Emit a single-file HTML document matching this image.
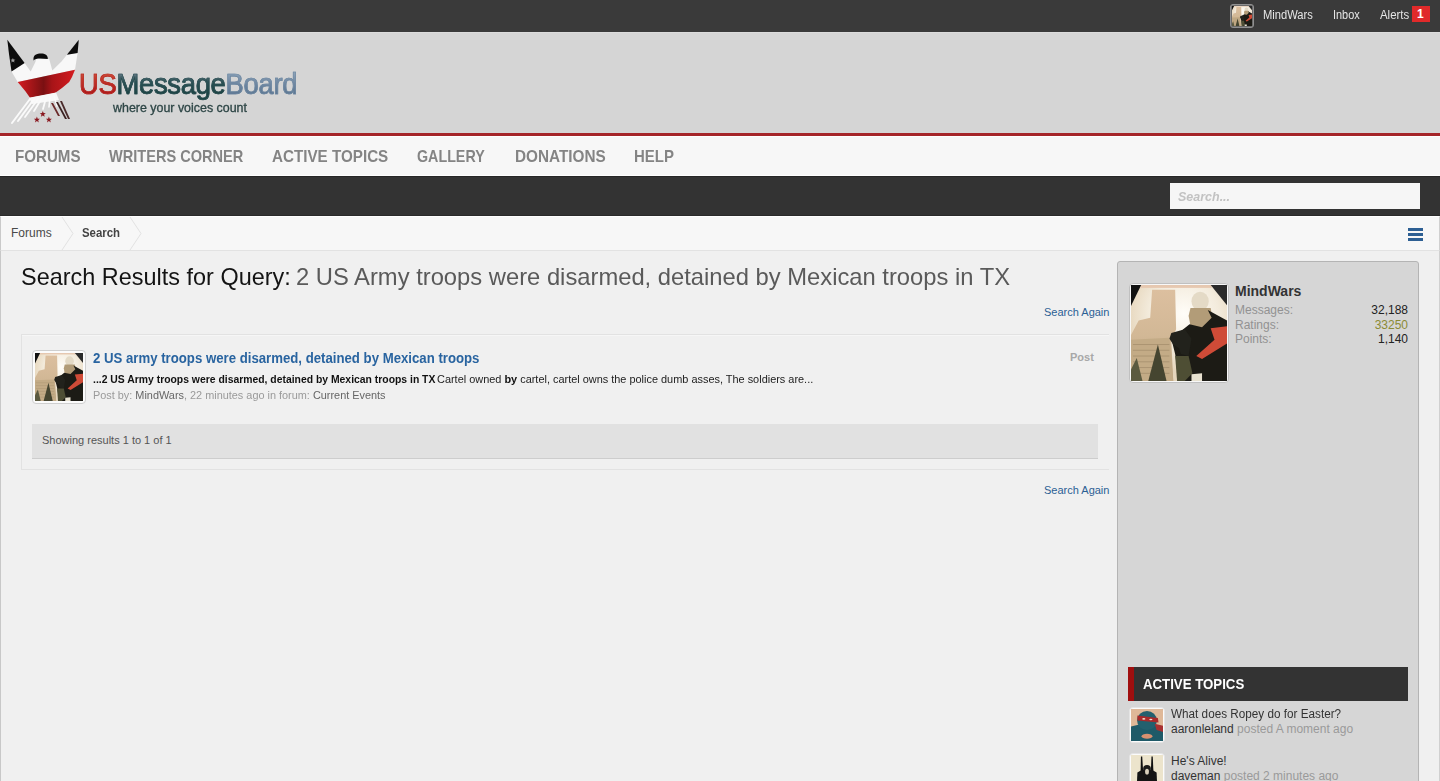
<!DOCTYPE html>
<html><head><meta charset="utf-8">
<style>
html,body{margin:0;padding:0;width:1440px;height:781px;overflow:hidden;background:#f0f0f0;font-family:"Liberation Sans",sans-serif;}
.a{position:absolute;}
.t{position:absolute;white-space:nowrap;line-height:1;}
#topbar{left:0;top:0;width:1440px;height:32px;background:#3a3a3a;}
#header{left:0;top:32px;width:1440px;height:101px;background:#d5d5d5;border-top:1px solid #dcdcdc;box-sizing:border-box;}
#red{left:0;top:133px;width:1440px;height:3px;background:#a52529;}
#nav{left:0;top:136px;width:1440px;height:40px;background:#f7f7f7;border-top:1px solid #fff;border-bottom:1px solid #fff;box-sizing:border-box;}
#dark{left:0;top:176px;width:1440px;height:40px;background:#333;border-top:1px solid #262626;border-bottom:1px solid #2a2a2a;box-sizing:border-box;}
#crumbs{left:0;top:216px;width:1440px;height:35px;background:#f7f7f7;border-top:1px solid #fff;border-bottom:1px solid #e2e2e2;border-left:1px solid #cacaca;border-right:1px solid #d0d0d0;box-sizing:border-box;}
#main{left:0;top:251px;width:1440px;height:530px;background:#f0f0f0;border-left:1px solid #c8c8c8;border-right:1px solid #d0d0d0;box-sizing:border-box;}
.nav{font-size:17px;font-weight:700;color:#848484;}
.tl{font-size:12px;color:#e6e6e6;}
.link{color:#2b5f94;}
.sx{transform-origin:0 0;}
</style></head><body>
<div id="topbar" class="a"></div>
<div id="header" class="a"></div>
<div id="red" class="a"></div>
<div id="nav" class="a"></div>
<div id="dark" class="a"></div>
<div id="crumbs" class="a"></div>
<div id="main" class="a"></div>

<!-- top bar links -->
<div class="a" style="left:1230px;top:4px;width:24px;height:24px;border:1px solid #909090;border-radius:3px;background:#6a6a6a;box-sizing:border-box;"></div>
<svg class="a" style="left:1232px;top:6px" width="20" height="20"><use href="#mw"/></svg>
<div class="t tl sx" style="left:1263px;top:9px;transform:scaleX(0.93)">MindWars</div>
<div class="t tl sx" style="left:1333px;top:9px;transform:scaleX(0.91)">Inbox</div>
<div class="t tl sx" style="left:1380px;top:9px;transform:scaleX(0.95)">Alerts</div>
<div class="a" style="left:1412px;top:6px;width:18px;height:16px;background:#e02a2a;"></div>
<div class="t" style="left:1417px;top:8px;font-size:12px;font-weight:700;color:#fff;">1</div>

<!-- nav -->
<div class="t nav sx" style="left:15px;top:148px;transform:scaleX(0.89)">FORUMS</div>
<div class="t nav sx" style="left:109px;top:148px;transform:scaleX(0.857)">WRITERS CORNER</div>
<div class="t nav sx" style="left:272px;top:148px;transform:scaleX(0.894)">ACTIVE TOPICS</div>
<div class="t nav sx" style="left:417px;top:148px;transform:scaleX(0.84)">GALLERY</div>
<div class="t nav sx" style="left:515px;top:148px;transform:scaleX(0.9)">DONATIONS</div>
<div class="t nav sx" style="left:634px;top:148px;transform:scaleX(0.88)">HELP</div>

<!-- search box -->
<div class="a" style="left:1170px;top:183px;width:250px;height:26px;background:#f6f6f6;"></div>
<div class="t sx" style="left:1178px;top:190px;font-size:13px;font-style:italic;font-weight:700;color:#c2c2c2;transform:scaleX(0.96)">Search...</div>

<!-- breadcrumbs -->
<div class="t" style="left:11px;top:227px;font-size:12px;color:#4a4a4a;">Forums</div>
<div class="t sx" style="left:82px;top:227px;font-size:12px;font-weight:700;color:#444;transform:scaleX(0.95)">Search</div>

<!-- title -->
<div class="t sx" style="left:21px;top:265px;font-size:24px;color:#141414;transform:scaleX(0.977)">Search Results for Query:</div>
<div class="t sx" style="left:296px;top:265px;font-size:24px;color:#5a5a5a;transform:scaleX(0.99)">2 US Army troops were disarmed, detained by Mexican troops in TX</div>
<div class="t link" style="left:1044px;top:307px;font-size:11px;">Search Again</div>

<!-- sidebar -->
<div class="a" style="left:1117px;top:261px;width:302px;height:540px;background:#d6d6d6;border:1px solid #b4b4b4;border-radius:3px;box-sizing:border-box;"></div>



<svg width="0" height="0" style="position:absolute">
<defs>
<symbol id="mw" viewBox="0 0 100 100">
<defs>
<radialGradient id="sky" cx="0.55" cy="0.3" r="0.6"><stop offset="0" stop-color="#fffdf8"/><stop offset="0.6" stop-color="#f3ebdc"/><stop offset="1" stop-color="#e6d6bc"/></radialGradient>
<linearGradient id="bld" x1="0" y1="0" x2="0" y2="1"><stop offset="0" stop-color="#dcbf9f"/><stop offset="0.5" stop-color="#d2b896"/><stop offset="1" stop-color="#bda580"/></linearGradient>
</defs>
<rect width="100" height="100" fill="url(#sky)"/>
<rect x="10" y="0" width="74" height="3" fill="#e6c8b0"/>
<polygon points="22,5 46,5 47,46 42,58 44,100 0,100 0,52 8,37 20,34" fill="url(#bld)"/>
<polygon points="0,57 40,55 44,100 0,100" fill="#c3ab86"/>
<g stroke="#8a7658" stroke-width="0.8" opacity="0.55">
<line x1="2" y1="62" x2="40" y2="62"/><line x1="2" y1="68" x2="40" y2="68"/><line x1="2" y1="74" x2="40" y2="74"/><line x1="2" y1="80" x2="40" y2="80"/><line x1="2" y1="86" x2="40" y2="86"/><line x1="2" y1="92" x2="40" y2="92"/>
</g>
<polygon points="28,62 37,100 18,100" fill="#454530"/>
<polygon points="6,76 12,100 0,100 0,88" fill="#5b5a40"/>
<polygon points="0,0 10.6,0 0,21.8" fill="#111"/>
<polygon points="83,0 100,0 100,21" fill="#2a2a2a"/>
<ellipse cx="72" cy="17" rx="9" ry="10" fill="#e4dac6"/>
<polygon points="62,24 83,24 85,36 75,46 62,43 60,32" fill="#b29c78"/>
<polygon points="80,26 100,37 100,100 50,100 46,72 42,56 61,41 74,44 84,34" fill="#1c1b15"/>
<polygon points="83,45 100,43 100,61 74,77 68,74 87,57" fill="#cf4b37"/>
<polygon points="42,50 56,46 63,56 60,74 52,72 50,66 44,62 40,56" fill="#22221c"/>
<polygon points="46,74 60,74 64,92 56,100 48,100" fill="#4e4e34"/>
<polygon points="63,93 74,92 74,100 63,100" fill="#e8e2d0"/>
</symbol>
<symbol id="turtle" viewBox="0 0 100 100">
<rect width="100" height="100" fill="#dfb898"/>
<polygon points="0,55 30,48 70,48 100,55 100,100 0,100" fill="#1f5a68"/>
<ellipse cx="50" cy="36" rx="31" ry="30" fill="#23606e"/>
<polygon points="20,20 84,28 86,42 20,36" fill="#a82a2a"/>
<ellipse cx="40" cy="31" rx="5" ry="2.5" fill="#f0e0d0"/>
<ellipse cx="62" cy="33" rx="5" ry="2.5" fill="#f0e0d0"/>
<polygon points="74,46 100,52 100,72 80,66" fill="#a83030"/>
<ellipse cx="50" cy="85" rx="17" ry="8" fill="#d89070"/>
</symbol>
<symbol id="dave" viewBox="0 0 100 100">
<rect width="100" height="100" fill="#ece4cc"/>
<polygon points="31,5 35,5 38,50 30,50" fill="#111"/>
<polygon points="64,5 68,5 70,50 62,50" fill="#111"/>
<polygon points="20,55 36,45 64,45 80,55 82,100 18,100" fill="#141414"/>
<ellipse cx="50" cy="42" rx="12" ry="11" fill="#1a1a1a"/>
<ellipse cx="50" cy="52" rx="6" ry="9" fill="#d8d0bc"/>
</symbol>
<linearGradient id="usg" x1="0" y1="0" x2="0" y2="1"><stop offset="0" stop-color="#c8443a"/><stop offset="1" stop-color="#a81c22"/></linearGradient>
</defs>
</svg>

<!-- logo eagle -->
<svg class="a" style="left:0;top:34px" width="100" height="96" viewBox="0 0 100 96">
<defs>
<linearGradient id="rg" x1="0" y1="0" x2="1" y2="0"><stop offset="0" stop-color="#d41c20"/><stop offset="0.45" stop-color="#7a1012"/><stop offset="0.6" stop-color="#a81418"/><stop offset="1" stop-color="#d41c20"/></linearGradient>
</defs>
<polygon points="11.5,37.4 24.6,28.9 30.7,37.4 35.4,28.1 36,25 49.2,25 52.3,36.6 61.5,27.4 66.9,20.8 77.6,18.9 75,35.8 17.7,48.1" fill="#f8f8f8"/>
<polygon points="7.3,5.8 24.6,28.9 11.5,37.4 9,20" fill="#0c0c0c"/>
<polygon points="66.9,20.8 78.8,5.8 77.6,18.9" fill="#0c0c0c"/>
<path d="M33.5,25.5 C33,21 37,19.5 41,19.5 C45,19.5 48,21 47.8,25 L40,24.5 C37,24.5 35,25 33.5,26.5 Z" fill="#0c0c0c"/>
<polygon points="17.7,48.1 75,35.8 72,43 69.2,48.1 62,54 55,59 45,61 30,63.7 25.4,57.3" fill="url(#rg)"/>
<polygon points="29,63.7 56,58.5 59,66 46,68 32,70" fill="#f8f8f8"/>
<g stroke="#fafafa" stroke-linecap="round">
<line x1="30" y1="65" x2="12" y2="89" stroke-width="2"/>
<line x1="34" y1="65" x2="18" y2="87" stroke-width="2"/>
<line x1="38" y1="65" x2="25" y2="83" stroke-width="1.8"/>
<line x1="42" y1="64" x2="34" y2="77" stroke-width="1.8"/>
<line x1="46" y1="64" x2="43" y2="75" stroke-width="1.8"/>
<line x1="50" y1="63" x2="49" y2="73" stroke-width="1.6"/>
<line x1="54" y1="62" x2="57" y2="72" stroke-width="1.6"/>
</g>
<polygon points="51,69 53,69 60,82 58,82" fill="#6a2a2a"/>
<polygon points="56,68 58,68 67,85 65,85" fill="#3a2020"/>
<polygon points="60,67 62,67 70,85 68,85" fill="#4a2a2a"/>
<polygon points="42.8,77.0 43.6,79.1 45.8,79.2 44.1,80.6 44.7,82.8 42.8,81.5 40.9,82.8 41.5,80.6 39.8,79.2 42.0,79.1" fill="#8a1820"/>
<polygon points="36.9,82.6 37.7,84.7 39.9,84.8 38.2,86.2 38.8,88.4 36.9,87.1 35.0,88.4 35.6,86.2 33.9,84.8 36.1,84.7" fill="#8a1820"/>
<polygon points="48.9,82.6 49.7,84.7 51.9,84.8 50.2,86.2 50.8,88.4 48.9,87.1 47.0,88.4 47.6,86.2 45.9,84.8 48.1,84.7" fill="#8a1820"/>
<polygon points="12.9,23.9 13.6,25.6 15.4,25.7 14,26.8 14.5,28.6 12.9,27.6 11.3,28.6 11.8,26.8 10.4,25.7 12.2,25.6" fill="#a0a0a0"/>
</svg>
<div class="t" style="left:79px;top:69px;font-size:30px;transform:scaleX(0.912);transform-origin:0 0;letter-spacing:-0.3px;-webkit-text-stroke:0.7px;"><span style="background:linear-gradient(#d8684e 0%,#c43a2c 35%,#b01c1c 75%);-webkit-background-clip:text;background-clip:text;-webkit-text-fill-color:transparent;-webkit-text-stroke:0.7px #b82a24">US</span><span style="background:linear-gradient(#6f8290 15%,#2c5256 45%,#1c4444 80%);-webkit-background-clip:text;background-clip:text;-webkit-text-fill-color:transparent;-webkit-text-stroke:0.7px #2a4c50">Message</span><span style="background:linear-gradient(#8ea4ba 15%,#7088a2 50%,#5e7894 80%);-webkit-background-clip:text;background-clip:text;-webkit-text-fill-color:transparent;-webkit-text-stroke:0.7px #6d87a0">Board</span></div>
<div class="t" style="left:113px;top:101px;font-size:13.5px;color:#2e4646;transform:scaleX(0.92);transform-origin:0 0;-webkit-text-stroke:0.35px;">where your voices count</div>

<!-- hamburger -->
<div class="a" style="left:1408px;top:228px;width:15px;height:3px;background:#2d5f93;"></div>
<div class="a" style="left:1408px;top:233px;width:15px;height:3px;background:#2d5f93;"></div>
<div class="a" style="left:1408px;top:238px;width:15px;height:3px;background:#2d5f93;"></div>

<!-- breadcrumb arrows -->
<svg class="a" style="left:60px;top:217px" width="16" height="33"><polyline points="2,0 13,16.5 2,33" fill="none" stroke="#e2e2e2" stroke-width="1"/></svg>
<svg class="a" style="left:128px;top:217px" width="16" height="33"><polyline points="2,0 13,16.5 2,33" fill="none" stroke="#e2e2e2" stroke-width="1"/></svg>

<!-- results box -->
<div class="a" style="left:21px;top:334px;width:1088px;height:136px;border:1px solid #e2e2e2;border-right:none;box-sizing:border-box;"></div>
<div class="a" style="left:22px;top:335px;width:1087px;height:1px;background:#f6f6f6;"></div>
<div class="a" style="left:32px;top:350px;width:54px;height:54px;border:1px solid #cfcfcf;border-radius:4px;background:#fbfbfb;box-sizing:border-box;"></div>
<svg class="a" style="left:35px;top:353px" width="48" height="48"><use href="#mw"/></svg>
<div class="t link sx" style="left:93px;top:351px;font-size:14.5px;font-weight:700;color:#2964a0;transform:scaleX(0.91)">2 US army troops were disarmed, detained by Mexican troops</div>
<div class="t" style="left:1070px;top:352px;font-size:11px;font-weight:700;color:#a8a8a8;">Post</div>
<div class="t sx" style="left:93px;top:374px;font-size:11px;color:#111;font-weight:700;transform:scaleX(0.944)">...2 US Army troops were disarmed, detained by Mexican troops in TX</div>
<div class="t sx" style="left:437px;top:374px;font-size:11px;color:#222;transform:scaleX(0.993)">Cartel owned <b style="color:#111">by</b> cartel, cartel owns the police dumb asses, The soldiers are...</div>
<div class="t sx" style="left:93px;top:390px;font-size:11px;color:#9a9a9a;transform:scaleX(0.99)">Post by: <span style="color:#666">MindWars</span>, 22 minutes ago in forum: <span style="color:#666">Current Events</span></div>
<div class="a" style="left:32px;top:424px;width:1066px;height:35px;background:#e1e1e1;border-bottom:1px solid #cdcdcd;box-sizing:border-box;"></div>
<div class="t" style="left:42px;top:435px;font-size:11px;color:#555;">Showing results 1 to 1 of 1</div>
<div class="t link" style="left:1044px;top:485px;font-size:11px;">Search Again</div>

<!-- sidebar content -->
<div class="a" style="left:1129px;top:283px;width:100px;height:100px;border:1px solid #c0c0c0;border-radius:4px;background:#f8f8f8;box-sizing:border-box;"></div>
<svg class="a" style="left:1131px;top:285px" width="96" height="96"><use href="#mw"/></svg>
<div class="t" style="left:1235px;top:284px;font-size:14px;font-weight:700;color:#333;">MindWars</div>
<div class="t" style="left:1235px;top:304px;font-size:12px;color:#929292;">Messages:</div>
<div class="t" style="left:1235px;top:319px;font-size:12px;color:#929292;">Ratings:</div>
<div class="t" style="left:1235px;top:333px;font-size:12px;color:#929292;">Points:</div>
<div class="t" style="right:32px;top:304px;font-size:12px;color:#222;">32,188</div>
<div class="t" style="right:32px;top:319px;font-size:12px;color:#8b8b35;">33250</div>
<div class="t" style="right:32px;top:333px;font-size:12px;color:#222;">1,140</div>

<div class="a" style="left:1128px;top:667px;width:280px;height:34px;background:#333;"></div>
<div class="a" style="left:1128px;top:667px;width:6px;height:34px;background:#a00f0f;"></div>
<div class="t sx" style="left:1143px;top:677px;font-size:14px;font-weight:700;color:#fff;transform:scaleX(0.945)">ACTIVE TOPICS</div>

<div class="a" style="left:1129px;top:707px;width:36px;height:36px;border:1px solid #e4e4e4;border-radius:4px;background:#fbfbfb;box-sizing:border-box;"></div>
<svg class="a" style="left:1131px;top:709px" width="32" height="32"><use href="#turtle"/></svg>
<div class="t sx" style="left:1171px;top:708px;font-size:12px;color:#333;transform:scaleX(0.977)">What does Ropey do for Easter?</div>
<div class="t sx" style="left:1171px;top:723px;font-size:12px;color:#333;transform:scaleX(1.0)">aaronleland <span style="color:#9a9a9a">posted A moment ago</span></div>

<div class="a" style="left:1129px;top:753px;width:36px;height:36px;border:1px solid #e4e4e4;border-radius:4px;background:#fbfbfb;box-sizing:border-box;"></div>
<svg class="a" style="left:1131px;top:755px" width="32" height="32"><use href="#dave"/></svg>
<div class="t" style="left:1171px;top:755px;font-size:12px;color:#333;">He's Alive!</div>
<div class="t" style="left:1171px;top:770px;font-size:12px;color:#333;">daveman <span style="color:#9a9a9a">posted 2 minutes ago</span></div>
</body></html>
